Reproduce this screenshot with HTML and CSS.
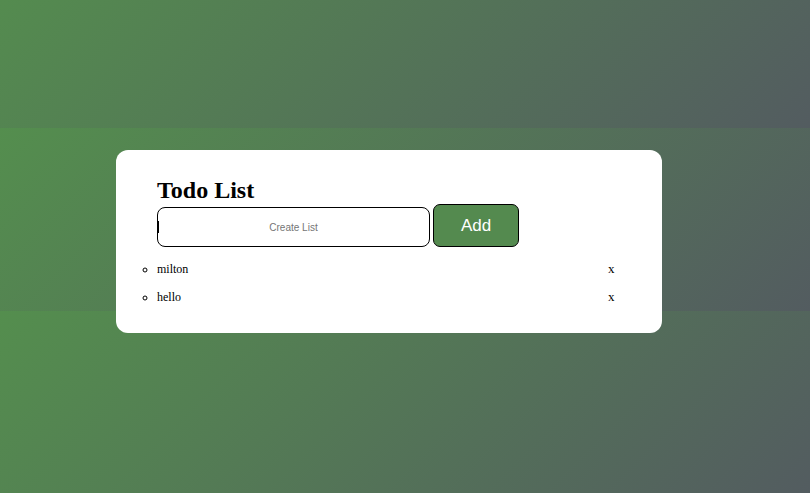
FILE: index.html
```html
<!DOCTYPE html>
<html lang="en">
<head>
<meta charset="utf-8">
<title>Todo List</title>
<link rel="stylesheet" href="styles.css">
</head>
<body>
  <div class="card">
    <h2 class="title">Todo List</h2>
    <div class="controls">
      <span class="field">
        <input class="input" type="text" placeholder="Create List">
      </span>
      <button class="add">Add</button>
    </div>
    <ul class="list">
      <li class="item"><span class="label">milton</span><span class="remove">x</span></li>
      <li class="item"><span class="label">hello</span><span class="remove">x</span></li>
    </ul>
  </div>
</body>
</html>
```

FILE: styles.css
```css
html {
  background-color: #535f5c;
  background-image: linear-gradient(135deg, #548e4e 0%, #535c60 100%);
  background-size: 100% 183px;
  background-position: 0 128px;
  background-repeat: repeat;
  min-height: 100%;
}

body {
  margin: 0;
  padding: 150px 0 0 116px;
  font-family: "Liberation Serif", "Times New Roman", serif;
}

.card {
  box-sizing: border-box;
  width: 546px;
  height: 183px;
  background: #ffffff;
  border-radius: 12px;
  padding: 26px 40px 0 41px;
}

.title {
  margin: 0;
  font-size: 24px;
  line-height: 28px;
  font-weight: bold;
  color: #000;
}

.controls {
  display: flex;
  align-items: flex-end;
  gap: 3px;
}

.field {
  position: relative;
  display: block;
}

.field::after {
  content: "";
  position: absolute;
  left: 1px;
  top: 14px;
  width: 1px;
  height: 12px;
  background: #000;
}

.input {
  box-sizing: border-box;
  display: block;
  width: 273px;
  height: 40px;
  margin: 0;
  padding: 0;
  border: 1px solid #000;
  border-radius: 8px;
  background: #fff;
  font-family: "Liberation Sans", Arial, sans-serif;
  font-size: 10px;
  outline: none;
}

.input::placeholder {
  color: #757575;
  text-align: center;
}

.add {
  box-sizing: border-box;
  width: 86px;
  height: 43px;
  margin: 0;
  padding: 0;
  border: 1px solid #000;
  border-radius: 7px;
  background: #548a4f;
  color: #fff;
  font-family: "Liberation Sans", Arial, sans-serif;
  font-size: 17px;
}

.list {
  list-style: circle;
  margin: 8px 0 0 0;
  padding: 0;
}

.item {
  display: list-item;
  height: 28px;
  line-height: 28px;
  font-size: 12px;
  color: #000;
  white-space: nowrap;
}

.item .label {
  display: inline-block;
  width: 451px;
}

.remove {
  display: inline-block;
  font-size: 13px;
}
```
